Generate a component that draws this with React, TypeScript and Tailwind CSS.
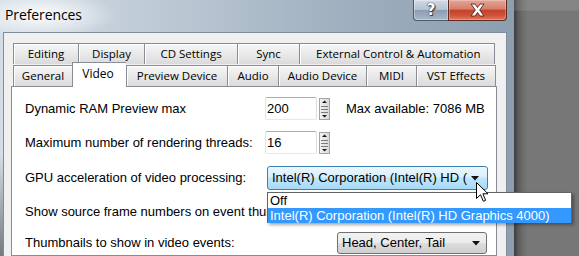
import React from "react";

const tabBase =
  "flex items-center justify-center border-l border-t border-[#898c95] bg-[linear-gradient(to_bottom,#f6f6f6,#e9e9e9_50%,#dadada)] shadow-[inset_1px_1px_0_#ffffff] text-black";

function Tab({ w, label, last, className = "" }: { w: string; label: string; last?: boolean; className?: string }) {
  return (
    <div className={`${tabBase} ${w} ${last ? "border-r" : ""} ${className}`}>
      <span>{label}</span>
    </div>
  );
}

function Spinner() {
  return (
    <svg width="11" height="22" viewBox="0 0 11 22" className="ml-[2px] self-center">
      <defs>
        <linearGradient id="sg" x1="0" x2="1" y1="0" y2="0">
          <stop offset="0" stopColor="#f3f3f3" />
          <stop offset="1" stopColor="#d9d9d9" />
        </linearGradient>
      </defs>
      <rect x="0.5" y="0.5" width="10" height="21" fill="url(#sg)" stroke="#a3a3a3" />
      <polygon points="3,5 5.5,2.5 8,5" fill="#1a1a1a" />
      <line x1="2" x2="9" y1="8.5" y2="8.5" stroke="#7d7d7d" />
      <line x1="2" x2="9" y1="11.5" y2="11.5" stroke="#7d7d7d" />
      <line x1="2" x2="9" y1="14.5" y2="14.5" stroke="#7d7d7d" />
      <polygon points="3,17 8,17 5.5,19.5" fill="#1a1a1a" />
    </svg>
  );
}

function SpinBox({ value }: { value: string }) {
  return (
    <div className="flex h-[23px]">
      <div className="w-[52px] h-full bg-white border border-t-[#abadb3] border-l-[#e2e3ea] border-r-[#dbdfe6] border-b-[#e3e9ef] rounded-[2px] flex items-center pl-[1px]">
        {value}
      </div>
      <Spinner />
    </div>
  );
}

function Arrow() {
  return (
    <svg width="8" height="5" viewBox="0 0 8 5">
      <polygon points="0,0 8,0 4,4.5" fill="#111" />
    </svg>
  );
}

export default function App() {
  return (
    <div className="relative w-[579px] h-[256px] overflow-hidden flex bg-[#777777] font-['Liberation_Sans',Arial,sans-serif] text-[13px] text-black">
      {/* Window */}
      <div className="w-[514px] h-full shrink-0 flex flex-col bg-[image:radial-gradient(ellipse_75px_24px_at_42px_15px,rgba(255,255,255,0.95),rgba(255,255,255,0)),linear-gradient(to_right,#d4dde6,#bac7d3_35%,#9dadbd_70%,#8d9faf)]">
        {/* title bar */}
        <div className="h-[32px] shrink-0 flex items-start pr-[7px]">
          <div className="flex-1 pl-[5px] pt-[5px] font-['Open_Sans',sans-serif] text-[14px] leading-[20px] tracking-[-0.1px] text-black">
            Preferences
          </div>
          <div className="w-[35px] h-[21px] rounded-bl-[4px] border border-t-0 border-r-0 border-[#4a5b6e] bg-[linear-gradient(to_bottom,#d0dbe6,#b4c3d2_48%,#8c9db0_52%,#a6b8ca)] shadow-[inset_0_0_0_1px_rgba(255,255,255,0.35)] flex items-center justify-center">
            <span className="font-['DejaVu_Sans',sans-serif] font-bold text-[15px] leading-none text-white [text-shadow:0_0_1px_#2a3440,0_0_1px_#2a3440,1px_1px_1px_#2a3440]">?</span>
          </div>
          <div className="w-[59px] h-[21px] rounded-br-[4px] border border-t-0 border-[#5b2a22] bg-[linear-gradient(to_bottom,#e6a597,#d57d6b_45%,#c2432c_52%,#cf4f36_75%,#df7a5e)] shadow-[inset_0_0_0_1px_rgba(255,255,255,0.25)] flex items-center justify-center">
            <svg width="17" height="14" viewBox="0 0 17 14">
              <path
                d="M2 1 L6 1 L8.5 4.5 L11 1 L15 1 L10.7 7 L15 13 L11 13 L8.5 9.5 L6 13 L2 13 L6.3 7 Z"
                fill="#ffffff"
                stroke="#5a2218"
                strokeWidth="0.9"
                strokeLinejoin="round"
              />
            </svg>
          </div>
        </div>
        {/* body */}
        <div className="flex-1 flex min-h-0">
          <div className="w-[3px] bg-[linear-gradient(to_bottom,rgba(0,0,0,0)_55%,rgba(0,0,0,0.45))]" />
          <div className="w-[504px] bg-[#f0f0f0] border-t border-l border-r border-[#7f8e9d] pt-[10px] pl-[7px] flex flex-col">
            <div className="w-[486px] flex flex-col flex-1 font-['Open_Sans',sans-serif] text-[11.5px]">
              {/* row 1 tabs */}
              <div className="flex h-[22px] ml-[2px] pb-[1px]">
                <Tab w="w-[65px]" label="Editing" />
                <Tab w="w-[66px]" label="Display" />
                <Tab w="w-[93px]" label="CD Settings" />
                <Tab w="w-[62px]" label="Sync" />
                <Tab w="w-[196px]" label="External Control & Automation" last className="!justify-start pl-[16px]" />
              </div>
              {/* row 2 tabs */}
              <div className="flex h-[21px] ml-[2px] items-end">
                <Tab w="w-[59px] h-[21px]" label="General" />
                <div className="relative z-10 w-[54px] h-[25px] -mb-px bg-white border-l border-t border-[#898c95] flex justify-center pt-[2px] pr-[3px] text-[12px]">
                  Video
                </div>
                <Tab w="w-[101px] h-[21px]" label="Preview Device" />
                <Tab w="w-[51px] h-[21px]" label="Audio" />
                <Tab w="w-[88px] h-[21px]" label="Audio Device" />
                <Tab w="w-[50px] h-[21px]" label="MIDI" />
                <Tab w="w-[80px] h-[21px]" label="VST Effects" last />
              </div>
              {/* panel */}
              <div className="flex-1 bg-white border border-[#898c95] pl-[13px] font-['Liberation_Sans',Arial,sans-serif] text-[13px]">
                <div className="flex items-center h-[23px] mt-[10px]">
                  <span className="w-[240px]">Dynamic RAM Preview max</span>
                  <SpinBox value="200" />
                  <span className="ml-[16px]">Max available: 7086 MB</span>
                </div>
                <div className="flex items-center h-[23px] mt-[11px]">
                  <span className="w-[240px]">Maximum number of rendering threads:</span>
                  <SpinBox value="16" />
                </div>
                <div className="flex items-center h-[24px] mt-[12px]">
                  <span className="w-[242px]">GPU acceleration of video processing:</span>
                  <div className="w-[221px] h-[24px] rounded-[3px] border border-[#3c7fb1] bg-[linear-gradient(to_bottom,#eaf6fd,#d9f0fc_45%,#bee6fd_50%,#a7d9f5)] flex items-center pl-[4px] pr-[4px]">
                    <span className="w-[198px] overflow-hidden whitespace-nowrap">Intel(R) Corporation (Intel(R) HD (</span>
                    <span className="ml-auto mr-[4px] flex"><Arrow /></span>
                  </div>
                </div>
                <div className="flex items-center h-[22px] mt-[11px]">
                  <span className="w-[242px] overflow-hidden whitespace-nowrap">Show source frame numbers on event thumbnails as:</span>
                </div>
                <div className="flex items-center h-[22px] mt-[9px]">
                  <span className="w-[312px]">Thumbnails to show in video events:</span>
                  <div className="w-[150px] h-[22px] rounded-[3px] border border-[#707070] bg-[linear-gradient(to_bottom,#f2f2f2,#ebebeb_50%,#dddddd_51%,#cfcfcf)] flex items-center pl-[4px] pr-[6px]">
                    <span>Head, Center, Tail</span>
                    <span className="ml-auto flex"><Arrow /></span>
                  </div>
                </div>
              </div>
            </div>
          </div>
        </div>
      </div>
      {/* desktop behind */}
      <div className="flex-1 h-full bg-[image:linear-gradient(to_bottom,rgba(255,255,255,0.1)_0,rgba(255,255,255,0.1)_10px,rgba(255,255,255,0)_11px),linear-gradient(to_right,#3c3c3c,#5a5a5a_4px,#6e6e6e_9px,#777777_14px)]" />

      {/* dropdown list overlay */}
      <div className="absolute left-[267px] top-[192px] w-[305px] h-[31px] bg-white border border-[#646464] shadow-[2px_2px_3px_rgba(0,0,0,0.35)] flex flex-col">
        <div className="h-[15px] pl-[2px] leading-[15px]">Off</div>
        <div className="h-[15px] pl-[2px] leading-[15px] bg-[#3399ff] text-white">Intel(R) Corporation (Intel(R) HD Graphics 4000)</div>
      </div>

      {/* mouse cursor */}
      <svg className="absolute left-[476px] top-[182px]" width="14" height="21" viewBox="0 0 14 21">
        <path d="M0.5 0.5 L0.5 16.5 L4.5 12.7 L7.3 19.3 L9.6 18.3 L6.9 11.8 L12 11.8 Z" fill="#ffffff" stroke="#000000" strokeWidth="1" strokeLinejoin="round" />
      </svg>
    </div>
  );
}
